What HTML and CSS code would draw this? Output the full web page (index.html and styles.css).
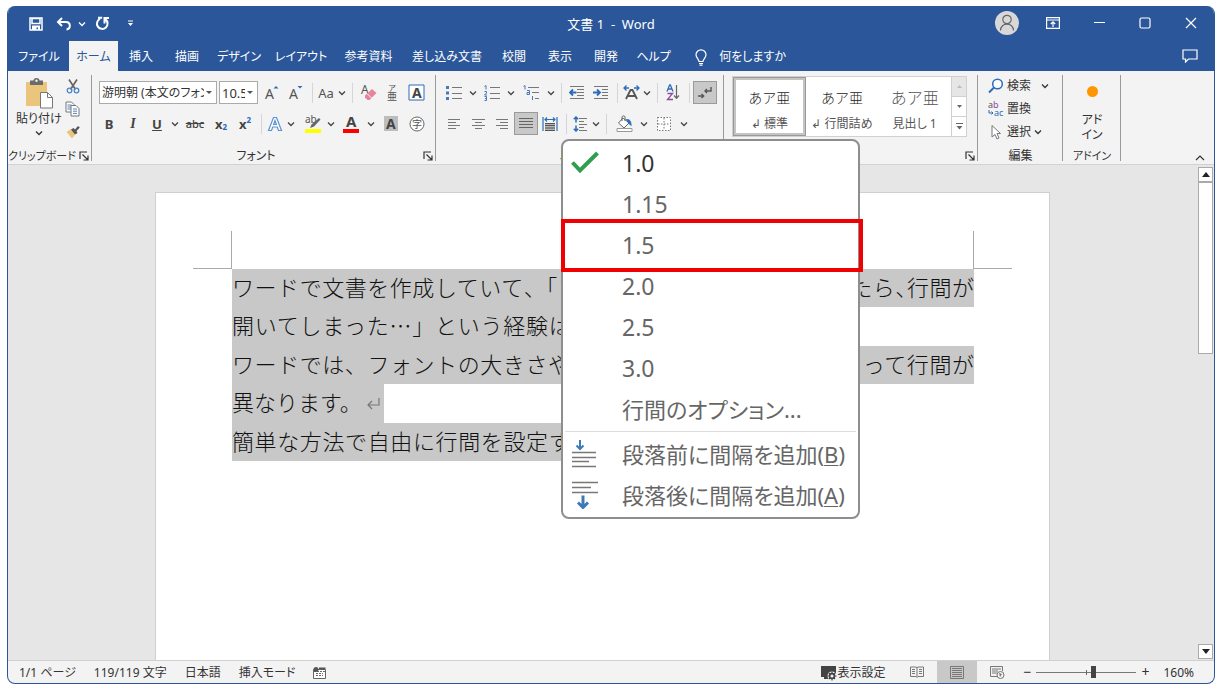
FILE: index.html
```html
<!DOCTYPE html>
<html lang="ja">
<head>
<meta charset="utf-8">
<meta name="viewport" content="width=device-width, initial-scale=1">
<title>文書 1 - Word</title>
<link rel="stylesheet" href="styles.css">
</head>
<body>
<svg class="defs" aria-hidden="true">
  <symbol id="chev" viewBox="0 0 8 8"><path d="M1 2.5l3 3 3-3" fill="none" stroke="currentColor" stroke-width="1.3"/></symbol>
  <symbol id="launch" viewBox="0 0 10 10"><path d="M1 8V1h7M3.500 3.500l5 5M9 4.500v4.500H4.500" fill="none" stroke="#333" stroke-width="1.200"/></symbol>
</svg>
<div class="window">
  <header class="titlebar">
    <div class="quick">
      <button class="tb" aria-label="上書き保存"><svg width="14" height="14" viewBox="0 0 14 14"><path d="M1 1h12v12H1z M3 1.500h8v5H3z" fill="none" stroke="#fff" stroke-width="1.500"/><path d="M3 8.500h8V13H9V10.500H7.500V13H3z" fill="#fff"/></svg></button>
      <button class="tb undo" aria-label="元に戻す"><svg width="16" height="14" viewBox="0 0 16 14"><path d="M6 1L2 5l4 4M2.500 5H10c5 0 5 7 .5 7.500" fill="none" stroke="#fff" stroke-width="2"/></svg></button>
      <button class="chev" aria-label="元に戻すの一覧"><svg width="8" height="8"><use href="#chev"/></svg></button>
      <button class="tb redo" aria-label="繰り返し"><svg width="15" height="15" viewBox="0 0 15 15"><path d="M5 2.800a5.300 5.300 0 1 0 5.500.6M3 1.800h4.200M9.500 7.500V2H14" fill="none" stroke="#fff" stroke-width="2"/></svg></button>
      <button class="tb custom" aria-label="カスタマイズ"><svg width="7" height="7" viewBox="0 0 7 7"><path d="M1 1h5" stroke="#fff"/><path d="M1 3h5L3.500 6z" fill="#fff"/></svg></button>
    </div>
    <h1 class="doc-title">文書 1&nbsp; -&nbsp; Word</h1>
    <div class="controls">
      <button class="avatar" aria-label="アカウント"><svg width="24" height="24" viewBox="0 0 24 24"><circle cx="12" cy="12" r="12" fill="#d8d8d8"/><circle cx="12" cy="8.500" r="4.200" fill="none" stroke="#666" stroke-width="1.200"/><path d="M5.500 19.500c0-8.500 13-8.500 13 0" fill="none" stroke="#666" stroke-width="1.200"/></svg></button>
      <button class="wc" aria-label="リボンの表示オプション"><svg width="14" height="12" viewBox="0 0 14 12"><path d="M.6.6h12.800v10.800H.6zM.6 3h12.800M7 10V5M4.800 7L7 4.800 9.200 7" fill="none" stroke="#fff" stroke-width="1.200"/></svg></button>
      <button class="wc" aria-label="最小化"><svg width="11" height="12" viewBox="0 0 11 12"><path d="M0 5.500h11" stroke="#fff"/></svg></button>
      <button class="wc" aria-label="最大化"><svg width="12" height="12" viewBox="0 0 12 12"><rect x="1" y="1" width="10" height="10" rx="1.500" fill="none" stroke="#fff" stroke-width="1.200"/></svg></button>
      <button class="wc" aria-label="閉じる"><svg width="12" height="12" viewBox="0 0 12 12"><path d="M1 1l10 10M11 1L1 11" stroke="#fff" stroke-width="1.200"/></svg></button>
    </div>
  </header>

  <nav class="tabs">
    <button class="tab t4">ファイル</button>
    <button class="tab t3 active">ホーム</button>
    <button class="tab">挿入</button>
    <button class="tab">描画</button>
    <button class="tab t5">デザイン</button>
    <button class="tab t6">レイアウト</button>
    <button class="tab t7">参考資料</button>
    <button class="tab t8">差し込み文書</button>
    <button class="tab">校閲</button>
    <button class="tab">表示</button>
    <button class="tab">開発</button>
    <button class="tab t3">ヘルプ</button>
    <button class="tab tell"><svg width="12" height="17" viewBox="0 0 12 17"><path d="M4 12.500C4 10 1 9 1 5.800a5 5 0 0 1 10 0C11 9 8 10 8 12.500zM4 14.500h4M4.500 16.200h3" fill="none" stroke="#fff" stroke-width="1.200"/></svg>何をしますか</button>
    <button class="comment" aria-label="コメント"><svg width="16" height="14" viewBox="0 0 16 14"><path d="M1 1h14v9H6.500L3.500 13v-3H1z" fill="none" stroke="#fff" stroke-width="1.200"/></svg></button>
  </nav>

  <section class="ribbon">
    <div class="group clip">
      <div class="clip-body">
        <button class="paste"><svg width="30" height="31" viewBox="0 0 30 31"><path d="M2 4h21v24H2z" fill="#ebc57c"/><path d="M6 2.500h3.500a3 2.500 0 0 1 6 0H19V7H6z" fill="#6b6b6b"/><circle cx="12.500" cy="2.800" r="1.200" fill="#f3f3f3"/><path d="M16.500 14.500h7l5 5v10.500h-12z" fill="#fff" stroke="#777"/><path d="M23.500 14.500v5h5" fill="none" stroke="#777"/></svg><span>貼り付け</span><svg width="8" height="8"><use href="#chev"/></svg></button>
        <div class="clip-side">
          <button aria-label="切り取り"><svg width="14" height="15" viewBox="0 0 14 15"><path d="M3 .5l6.500 10M11 .5l-6.500 10" stroke="#666" stroke-width="1.700"/><circle cx="3.500" cy="11.500" r="2.300" fill="none" stroke="#4a86c5" stroke-width="1.300"/><circle cx="10.500" cy="11.500" r="2.300" fill="none" stroke="#4a86c5" stroke-width="1.300"/></svg></button>
          <button aria-label="コピー"><svg width="15" height="16" viewBox="0 0 15 16"><path d="M1 1h5.500L9 3.500V11H1z" fill="#fff" stroke="#777"/><path d="M2.500 4h4M2.500 6h4M2.500 8h4" stroke="#4a86c5"/><path d="M6 4.500h5l3 3v7.500H6z" fill="#fff" stroke="#777"/><path d="M8 8h4M8 10.200h4M8 12.400h4" stroke="#4a86c5"/></svg></button>
          <button aria-label="書式のコピー"><svg width="14" height="14" viewBox="0 0 14 14"><path d="M.5 7l4.500-3 4.500 5L6 13.500z" fill="#ebc57c"/><path d="M5 4.500L7.500 3l1.500 1.500L12 1l1.800 1.500L10.500 6l1 2L9 9.500z" fill="#555"/></svg></button>
        </div>
      </div>
      <div class="glabel small"><span>クリップボード</span><button class="launch" aria-label="クリップボードの詳細"><svg width="10" height="10"><use href="#launch"/></svg></button></div>
    </div>

    <div class="group font">
      <div class="row r1">
        <button class="combo name"><span>游明朝 (本文のフォント)</span><i></i></button>
        <button class="combo size"><span>10.5</span><i></i></button>
        <button class="b24" aria-label="フォントサイズの拡大"><svg width="16" height="16" viewBox="0 0 16 16"><text x="1" y="14" class="g14">A</text><path d="M9.500 3.500L12 1l2.500 2.500z" fill="#2b6cb8"/></svg></button>
        <button class="b24" aria-label="フォントサイズの縮小"><svg width="16" height="16" viewBox="0 0 16 16"><text x="1" y="14" class="g14">A</text><path d="M9.500 1h5L12 3.500z" fill="#2b6cb8"/></svg></button>
        <s></s>
        <button class="b20 gray">Aa</button><button class="chev" aria-label="文字種の一覧"><svg width="8" height="8"><use href="#chev"/></svg></button>
        <s></s>
        <button class="b24" aria-label="書式のクリア"><svg width="17" height="17" viewBox="0 0 17 17"><text x="1" y="10" class="g12">A</text><path d="M5 11.500L12 5l4.500 4-7 7H7.500L5 13.500z" fill="#e8849a"/><path d="M7 9.500l4.500 4.500" stroke="#f3f3f3"/></svg></button>
        <button class="b24" aria-label="ルビ"><svg width="14" height="18" viewBox="0 0 14 18"><text x="3" y="7" class="g8">ア</text><text x="2" y="16" class="g10">亜</text></svg></button>
        <button class="b24" aria-label="囲み線"><svg width="17" height="17" viewBox="0 0 17 17"><path d="M1 1h15v15H1z" fill="#fff" stroke="#2b6cb8"/><text x="4" y="14" class="g14 bold">A</text></svg></button>
      </div>
      <div class="row r2">
        <button class="b24 strong">B</button>
        <button class="b24 ital">I</button>
        <button class="b24 under">U</button><button class="chev" aria-label="下線の一覧"><svg width="8" height="8"><use href="#chev"/></svg></button>
        <button class="b28 strike">abc</button>
        <button class="b24 xs">x<sub>2</sub></button>
        <button class="b24 xs">x<sup>2</sup></button>
        <s></s>
        <button class="b20" aria-label="文字の効果"><svg width="16" height="16" viewBox="0 0 16 16"><path d="M1.500 14.500L6.500 1.500h3l5 13h-3L10.300 11H5.700l-1.200 3.500zM6.600 8.500h2.800L8 4.500z" fill="#fff" stroke="#5b93cf" stroke-width="1.200"/></svg></button><button class="chev" aria-label="文字の効果の一覧"><svg width="8" height="8"><use href="#chev"/></svg></button>
        <button class="b28 hl" aria-label="蛍光ペン"><svg width="18" height="18" viewBox="0 0 18 18"><path d="M1 14h16v4H1z" fill="#ff0"/><text x="1" y="8" class="g10">ab</text><path d="M15 3l1.500 1.500L10 11.500 6 13l1.500-3.500z" fill="#666"/></svg></button><button class="chev" aria-label="蛍光ペンの色"><svg width="8" height="8"><use href="#chev"/></svg></button>
        <button class="b28" aria-label="フォントの色"><svg width="18" height="18" viewBox="0 0 18 18"><path d="M1 14h16v4H1z" fill="#f00"/><text x="4" y="12" class="g15 bold">A</text></svg></button><button class="chev" aria-label="フォントの色の一覧"><svg width="8" height="8"><use href="#chev"/></svg></button>
        <button class="b28" aria-label="文字の網かけ"><svg width="14" height="15" viewBox="0 0 14 15"><path d="M0 0h14v15H0z" fill="#bdbdbd"/><text x="2" y="13" class="g14 bold">A</text></svg></button>
        <button class="b24" aria-label="囲い文字"><svg width="16" height="16" viewBox="0 0 16 16"><circle cx="8" cy="8" r="7" fill="#fff" stroke="#666"/><text x="3" y="12" class="g10">字</text></svg></button>
      </div>
      <div class="glabel"><span>フォント</span><button class="launch" aria-label="フォントの詳細"><svg width="10" height="10"><use href="#launch"/></svg></button></div>
    </div>

    <div class="group para">
      <div class="row r1">
        <button class="b26" aria-label="箇条書き"><svg width="16" height="14" viewBox="0 0 16 14"><path d="M6 1.500h10M6 7.500h10M6 12.500h10" stroke="#777"/><path d="M0 0h3v3H0zM0 5.500h3v3H0zM0 11h3v3H0z" fill="#4a77b5"/></svg></button><button class="chev" aria-label="箇条書きの一覧"><svg width="8" height="8"><use href="#chev"/></svg></button>
        <button class="b26" aria-label="段落番号"><svg width="16" height="16" viewBox="0 0 16 16"><path d="M6 2.500h10M6 8.500h10M6 13.500h10" stroke="#777"/><path d="M.5 1.500L2 .5v4M.5 6.500h2v1.500l-2 2h2.500M.5 11.500h2v4h-2M1 13.500h1.500" fill="none" stroke="#4a77b5"/></svg></button><button class="chev" aria-label="段落番号の一覧"><svg width="8" height="8"><use href="#chev"/></svg></button>
        <button class="b28" aria-label="アウトライン"><svg width="16" height="16" viewBox="0 0 16 16"><path d="M5 2.500h11M9 7.500h7M12 13.500h4" stroke="#777"/><path d="M.5 1.500L2 .5v4M4 5.500h2.500v4H4v-2h2.500M9.500 11v4" fill="none" stroke="#4a77b5"/></svg></button><button class="chev" aria-label="アウトラインの一覧"><svg width="8" height="8"><use href="#chev"/></svg></button>
        <s></s>
        <button class="b24" aria-label="インデントを減らす"><svg width="16" height="14" viewBox="0 0 16 14"><path d="M1 .5h14M8 3.500h7M8 6.500h7M8 9.500h7M1 12.500h14" stroke="#777"/><path d="M7.500 6.500H1.500M4 3.500l-3 3 3 3" fill="none" stroke="#2b6cb8" stroke-width="1.800"/></svg></button>
        <button class="b24" aria-label="インデントを増やす"><svg width="16" height="14" viewBox="0 0 16 14"><path d="M1 .5h14M9 3.500h6M9 6.500h6M9 9.500h6M1 12.500h14" stroke="#777"/><path d="M0 6.500h6M4 3.500l3 3-3 3" fill="none" stroke="#2b6cb8" stroke-width="1.800"/></svg></button>
        <s></s>
        <button class="b20" aria-label="拡張書式"><svg width="17" height="15" viewBox="0 0 17 15"><path d="M3 14L7.500 5h2L14 14M5 11h7" fill="none" stroke="#555" stroke-width="1.800"/><path d="M1 3h5M3.500.5L1 3l2.500 2.500M16 3h-5M13.500.5L16 3l-2.500 2.500" fill="none" stroke="#2b6cb8" stroke-width="1.300"/></svg></button><button class="chev" aria-label="拡張書式の一覧"><svg width="8" height="8"><use href="#chev"/></svg></button>
        <s></s>
        <button class="b24" aria-label="並べ替え"><svg width="14" height="17" viewBox="0 0 14 17"><path d="M1 7.500L3.700.8h.6L7 7.500M2 5h4" fill="none" stroke="#2b6cb8" stroke-width="1.300"/><path d="M1.500 9.500h5l-5 6h5.500" fill="none" stroke="#8d4ba0" stroke-width="1.300"/><path d="M10.500 1v13M8 11.500l2.500 2.800 2.500-2.800" fill="none" stroke="#666" stroke-width="1.200"/></svg></button>
        <s></s>
        <button class="b24 on" aria-label="編集記号の表示"><svg width="14" height="14" viewBox="0 0 14 14"><path d="M13 1v4H7M9 3L7 5l2 2M0 10h5.500M3.500 8l2.200 2-2.200 2" fill="none" stroke="#555" stroke-width="1.400"/></svg></button>
      </div>
      <div class="row r2">
        <button class="b24" aria-label="左揃え"><svg width="12" height="10" viewBox="0 0 12 10"><path d="M0 .5h12M0 3.500h8M0 6.500h12M0 9.500h8" stroke="#777"/></svg></button>
        <button class="b24" aria-label="中央揃え"><svg width="13" height="10" viewBox="0 0 13 10"><path d="M0 .5h13M3 3.500h7M0 6.500h13M3 9.500h7" stroke="#777"/></svg></button>
        <button class="b24" aria-label="右揃え"><svg width="12" height="10" viewBox="0 0 12 10"><path d="M0 .5h12M4 3.500h8M0 6.500h12M4 9.500h8" stroke="#777"/></svg></button>
        <button class="b24 on" aria-label="両端揃え"><svg width="14" height="12" viewBox="0 0 14 12"><path d="M0 .5h14M0 3.500h14M0 6.500h14M0 9.500h14" stroke="#666"/></svg></button>
        <button class="b24" aria-label="均等割り付け"><svg width="16" height="16" viewBox="0 0 16 16"><path d="M1 1v14M15 1v14M3 3.500h10M5 1.500L3 3.500l2 2M11 1.500l2 2-2 2" fill="none" stroke="#2b6cb8" stroke-width="1.200"/><path d="M3 7h10v8H3z" fill="#b5b5b5"/><path d="M3 7.500h10M3 9.500h10M3 12h10M3 14.500h10" stroke="#555"/></svg></button>
        <s></s>
        <div class="drop">
          <button class="b20" aria-label="行と段落の間隔" aria-expanded="true"><svg width="15" height="16" viewBox="0 0 15 16"><path d="M6 2.500h8M6 5.500h5M6 8.500h8M6 11.500h5M6 14.500h8" stroke="#777"/><path d="M3 1v5.500M.8 3.200L3 1l2.200 2.200M3 9.500V15M.8 12.800L3 15l2.200-2.200" fill="none" stroke="#2b6cb8" stroke-width="1.500"/></svg></button><button class="chev" aria-label="行間の一覧"><svg width="8" height="8"><use href="#chev"/></svg></button>
          <div class="menu" role="menu">
            <button class="item current" role="menuitem"><svg width="30" height="24" viewBox="0 0 30 24"><path d="M2.500 11.500l7.500 8L27.500 2" fill="none" stroke="#2f9e4f" stroke-width="4"/></svg><span>1.0</span></button>
            <button class="item" role="menuitem"><span>1.15</span></button>
            <button class="item marked" role="menuitem"><span>1.5</span></button>
            <button class="item" role="menuitem"><span>2.0</span></button>
            <button class="item" role="menuitem"><span>2.5</span></button>
            <button class="item" role="menuitem"><span>3.0</span></button>
            <button class="item words" role="menuitem"><span>行間のオプション...</span></button>
            <hr>
            <button class="item words" role="menuitem"><svg width="28" height="28" viewBox="0 0 28 28"><path d="M2 12.500h24M2 17.500h24M2 21.500h17M2 26.500h24" stroke="#777" stroke-width="1.500"/><path d="M10 0v8.500M6.500 5.500L10 9l3.500-3.500" fill="none" stroke="#3f7ab8" stroke-width="2"/></svg><span>段落前に間隔を追加(<u>B</u>)</span></button>
            <button class="item words" role="menuitem"><svg width="28" height="28" viewBox="0 0 28 28"><path d="M2 1.500h26M2 6.500h19M2 11.500h26" stroke="#777" stroke-width="1.500"/><path d="M13 14.500v12M8 21.500l5 5 5-5" fill="none" stroke="#3f7ab8" stroke-width="3"/></svg><span>段落後に間隔を追加(<u>A</u>)</span></button>
          </div>
        </div>
        <s></s>
        <button class="b28" aria-label="塗りつぶし"><svg width="17" height="17" viewBox="0 0 17 17"><path d="M7 3l6 5-5 5-5.500-5zM6 6V2c0-1.500 3-1.500 3 0v4" fill="#fff" stroke="#666"/><path d="M10.500 4.500c3 0 4.500 1 4.500 6l-2-2z" fill="#2b6cb8" stroke="#2b6cb8"/><path d="M1 13.500h15v3H1z" fill="#fff" stroke="#999"/></svg></button><button class="chev" aria-label="塗りつぶしの色"><svg width="8" height="8"><use href="#chev"/></svg></button>
        <button class="b28" aria-label="罫線"><svg width="14" height="14" viewBox="0 0 14 14"><path d="M.5.5h13v13H.5zM7 1v12M1 7h12" fill="#fff" stroke="#777" stroke-dasharray="1.500 1.500"/></svg></button><button class="chev" aria-label="罫線の一覧"><svg width="8" height="8"><use href="#chev"/></svg></button>
      </div>
      <div class="glabel"><span>段落</span><button class="launch" aria-label="段落の詳細"><svg width="10" height="10"><use href="#launch"/></svg></button></div>
    </div>

    <div class="group styles">
      <div class="gallery">
        <button class="style sel"><b>あア亜</b><span>↲ 標準</span></button>
        <button class="style"><b>あア亜</b><span>↲ 行間詰め</span></button>
        <button class="style head"><b>あア亜</b><span>見出し 1</span></button>
        <div class="gscroll">
          <button class="off" aria-label="前の行"><svg width="5" height="3" viewBox="0 0 5 3"><path d="M0 3h5L2.500 0z" fill="#bbb"/></svg></button>
          <button aria-label="次の行"><svg width="5" height="3" viewBox="0 0 5 3"><path d="M0 0h5L2.500 3z" fill="#666"/></svg></button>
          <button aria-label="その他"><svg width="7" height="7" viewBox="0 0 7 7"><path d="M0 .5h7" stroke="#666"/><path d="M.5 3h6L3.500 6.500z" fill="#666"/></svg></button>
        </div>
      </div>
      <div class="glabel"><span></span><button class="launch" aria-label="スタイルの詳細"><svg width="10" height="10"><use href="#launch"/></svg></button></div>
    </div>

    <div class="group edit">
      <div class="edit-body">
        <button class="cmd"><svg width="16" height="16" viewBox="0 0 16 16"><circle cx="9.500" cy="6" r="4.800" fill="#fff" stroke="#2b6cb8" stroke-width="1.500"/><path d="M6 9.500L1 14.500" stroke="#2b6cb8" stroke-width="2"/></svg>検索<svg class="far" width="8" height="8"><use href="#chev"/></svg></button>
        <button class="cmd"><svg width="16" height="16" viewBox="0 0 16 16"><text x="0" y="7" class="g9">a<tspan fill="#8d4ba0">b</tspan></text><text x="6" y="15" class="g9 blue">ac</text><path d="M1 9v3h4M3.500 10.500L5 12l-1.500 1.500" fill="none" stroke="#2b6cb8"/></svg>置換</button>
        <button class="cmd"><svg width="16" height="16" viewBox="0 0 16 16"><path d="M4 1.500v11.500l3-2.500 2 4.500 2-1-2-4.500h3.500z" fill="#fff" stroke="#777"/></svg>選択<svg width="8" height="8"><use href="#chev"/></svg></button>
      </div>
      <div class="glabel"><span>編集</span></div>
    </div>

    <div class="group addin">
      <button class="addin-btn"><i></i><span>アド<br>イン</span></button>
      <div class="glabel small"><span>アドイン</span></div>
    </div>
    <button class="collapse" aria-label="リボンを折りたたむ"><svg width="10" height="6" viewBox="0 0 10 6"><path d="M1 5l4-4 4 4" fill="none" stroke="#333" stroke-width="1.200"/></svg></button>
  </section>

  <main class="workspace">
    <div class="canvas">
      <article class="page">
        <div class="corners"><i class="left"></i><i class="right"></i></div>
        <div class="text">
          <p class="full"><mark>ワードで文書を作成していて<span class="half">、</span>「フォントのサイズを大きくしたら<span class="half">、</span>行間が</mark></p>
          <p class="part"><mark>開いてしまった…」という経験はありませんか？</mark></p>
          <p class="full"><mark>ワードでは、フォントの大きさや種類、ページ設定の内容によって行間が</mark></p>
          <p><mark>異なります。<svg width="22" height="16" viewBox="0 0 22 16"><path d="M17 3v7H6M10 6l-4 4 4 4" fill="none" stroke="#777" stroke-width="1.200"/></svg></mark></p>
          <p class="part"><mark>簡単な方法で自由に行間を設定する方法をご紹介</mark></p>
        </div>
      </article>
    </div>
    <div class="vscroll">
      <button aria-label="上へ"><svg width="8" height="5" viewBox="0 0 8 5"><path d="M0 5h8L4 0z" fill="#222"/></svg></button>
      <div class="thumb"></div>
      <button class="down" aria-label="下へ"><svg width="8" height="5" viewBox="0 0 8 5"><path d="M0 0h8L4 5z" fill="#222"/></svg></button>
    </div>
  </main>

  <footer class="status">
    <div class="st-left">
      <span>1/1 ページ</span><span>119/119 文字</span><span>日本語</span><span>挿入モード</span>
      <svg width="13" height="12" viewBox="0 0 13 12"><path d="M.5 2.500h12v9H.5z" fill="#fff" stroke="#666"/><path d="M1 4.500h11M3 6.500h7M3 8.500h7" stroke="#666" stroke-dasharray="2 1"/><circle cx="3" cy="2.500" r="2.500" fill="#555"/><path d="M6 1.500h6.500" stroke="#555" stroke-width="2"/></svg>
    </div>
    <div class="st-right">
      <button class="disp"><svg width="16" height="15" viewBox="0 0 16 15"><path d="M0 0h15v11H0zM3 11h5v2H3z" fill="#444"/><circle cx="11" cy="10" r="4.500" fill="#f3f3f3"/><circle cx="11" cy="10" r="2.500" fill="none" stroke="#444" stroke-width="1.500"/><path d="M11 5.500v9M6.500 10h9M8 7l6 6M14 7l-6 6" stroke="#444" stroke-width="1.200"/><circle cx="11" cy="10" r="1.500" fill="#f3f3f3"/></svg>表示設定</button>
      <button class="view" aria-label="閲覧モード"><svg width="14" height="12" viewBox="0 0 14 12"><path d="M.5 1h5.500l1 .8 1-.8h5.500v9.500H8l-1 1-1-1H.5zM7 2v9M2 3.500h3M2 5.500h3M2 7.500h3M9 3.500h3M9 5.500h3M9 7.500h3" fill="none" stroke="#777"/></svg></button>
      <button class="view cur" aria-label="印刷レイアウト"><svg width="14" height="13" viewBox="0 0 14 13"><path d="M.5.5h13v12H.5zM2 2.500h10M2 4.500h10M2 6.500h10M2 8.500h10M2 10.500h10" fill="none" stroke="#777"/></svg></button>
      <button class="view" aria-label="Webレイアウト"><svg width="15" height="13" viewBox="0 0 15 13"><path d="M7 10.500H.5V.5h12V5M2 3h9M2 5h6M2 7h5" fill="none" stroke="#777"/><circle cx="10.500" cy="9" r="3.500" fill="#f3f3f3" stroke="#777"/><path d="M9 7l3 1-2 3z" fill="#777"/></svg></button>
      <div class="zoom">
        <button aria-label="縮小">−</button>
        <input type="range" min="10" max="300" value="177" aria-label="ズーム">
        <button aria-label="拡大">+</button>
      </div>
      <span class="pct">160%</span>
    </div>
  </footer>
</div>
</body>
</html>
```

FILE: styles.css
```css
* { box-sizing: border-box; }
body {
  margin: 0;
  padding: 6px 8px 7px 7px;
  min-height: 100vh;
  display: flex;
  background: #fff;
  color: #333;
  font: 12px/16px "Noto Sans", "Noto Sans CJK JP", sans-serif;
  font-feature-settings: "palt";
}
button {
  border: 0;
  padding: 0;
  background: none;
  color: inherit;
  font: inherit;
  font-feature-settings: inherit;
  white-space: nowrap;
}
svg { flex: none; }
.defs { position: absolute; width: 0; height: 0; }
.window {
  flex: 1;
  min-width: 0;
  display: flex;
  flex-direction: column;
  border: 1px solid #2b579a;
  border-top: 0;
  border-radius: 8px;
  overflow: hidden;
  background: #f3f3f3;
}

/* Title bar */
.titlebar {
  display: grid;
  grid-template-columns: 1fr auto 1fr;
  align-items: center;
  height: 35px;
  background: #2b579a;
  color: #fff;
}
.quick, .controls { display: flex; align-items: center; }
.quick { padding-left: 16px; }
.controls { justify-content: flex-end; align-self: start; height: 34px; }
.quick button, .controls button { display: flex; align-items: center; justify-content: center; }
.tb { width: 24px; height: 24px; }
.undo { margin-left: 4px; }
.redo { margin-left: 2px; }
.custom { margin-left: 4px; }
.doc-title { margin: 0; font-size: 13px; font-weight: 400; }
.avatar { width: 24px; margin-right: 11px; }
.wc { width: 46px; height: 32px; }

/* Tabs */
.tabs {
  display: flex;
  height: 30px;
  padding-left: 1px;
  background: #2b579a;
  color: #fff;
}
.tab { flex: none; width: 46px; padding-top: 2px; text-align: center; }
.tab.t3 { width: 49px; }
.tab.t4 { width: 60px; }
.tab.t5 { width: 58px; }
.tab.t6 { width: 66px; }
.tab.t7 { width: 69px; }
.tab.t8 { width: 88px; }
.tab.tell { width: 108px; display: flex; align-items: center; justify-content: flex-end; gap: 12px; }
.tab.active { background: #f3f3f3; color: #2b579a; }
.comment { margin-left: auto; padding: 0 16px; display: flex; align-items: center; }

/* Ribbon */
.ribbon {
  position: relative;
  z-index: 2;
  display: flex;
  height: 94px;
  padding-top: 4px;
  border-bottom: 1px solid #d2d2d2;
  background: #f3f3f3;
}
.group {
  flex: none;
  display: flex;
  flex-direction: column;
  position: relative;
}
.group::after {
  content: "";
  position: absolute;
  top: 0;
  right: 0;
  bottom: 3px;
  width: 1px;
  background: #9a9a9a;
}
.glabel {
  margin-top: auto;
  display: flex;
  align-items: center;
  height: 16px;
}
.glabel.small { font-size: 11px; }
.glabel span { flex: 1; text-align: center; white-space: nowrap; }
.launch { width: 16px; display: flex; align-items: center; justify-content: center; }
.row { display: flex; align-items: center; height: 31px; }
.row button { display: flex; align-items: center; justify-content: center; height: 23px; color: #444; }
.row s { width: 8px; height: 20px; background: linear-gradient(#d5d5d5, #d5d5d5) center / 1px 100% no-repeat; }
.b20 { width: 20px; }
.b24 { width: 24px; }
.b26 { width: 26px; }
.b28 { width: 28px; }
.chev { width: 12px; }
.row .on { border: 1px solid #9a9a9a; background: #c8c8c8; }

.clip { width: 84px; }
.clip-body { display: flex; justify-content: space-between; padding: 3px 12px 0 8px; }
.paste { display: flex; flex-direction: column; align-items: center; gap: 2px; }
.clip-side { display: flex; flex-direction: column; gap: 7px; }
.clip-side button { display: flex; height: 16px; width: 15px; justify-content: center; align-items: center; }

.font { width: 344px; padding-top: 2px; }
.font .r1 { padding-left: 7px; }
.font .r2 { padding-left: 5px; }
.row .combo {
  justify-content: space-between;
  margin-right: 2px;
  padding: 0 4px 0 2px;
  border: 1px solid #aaa;
  background: #fff;
  color: #333;
}
.combo span { overflow: hidden; text-align: left; }
.combo i { flex: none; margin-left: 2px; border: 3px solid transparent; border-top-color: #555; border-bottom: 0; }
.combo.name { width: 118px; }
.combo.size { width: 39px; font-size: 13px; }
.row .gray { font-size: 13px; color: #555; }
.row .strong { font-weight: 700; font-size: 13px; }
.row .ital { font: italic 700 14px "Liberation Serif", serif; }
.row .under { font-weight: 700; font-size: 13px; text-decoration: underline; }
.row .strike { font-size: 11px; font-weight: 500; text-decoration: line-through; }
.row .xs { font-weight: 700; font-size: 13px; }
.xs sub, .xs sup { font-size: 8px; color: #2b6cb8; line-height: 8px; }
.xs sub { padding-top: 6px; }
.xs sup { padding-bottom: 8px; }
.row .hl { padding-left: 3px; }
svg text { fill: #555; font-feature-settings: normal; }
svg text.bold { font-weight: 700; fill: #444; }
svg text.blue { fill: #2b6cb8; }
.g8 { font-size: 8px; }
.g9 { font-size: 9px; }
.g10 { font-size: 10px; }
.g12 { font-size: 12px; }
.g14 { font-size: 14px; }
.g15 { font-size: 15px; }

.para { width: 288px; padding-top: 2px; z-index: 1; }
.para .r1 { padding-left: 5px; }
.para .r2 { padding-left: 6px; }

/* Line spacing menu */
.drop { position: relative; z-index: 1; display: flex; align-items: center; height: 31px; }
.menu {
  position: absolute;
  top: 100%;
  left: -9px;
  width: 299px;
  padding: 1px 0 2px;
  border: 2px solid #8e8e8e;
  border-radius: 8px;
  background: #fff;
}
.row .item {
  position: relative;
  display: grid;
  grid-template-columns: 42px 1fr;
  justify-items: start;
  width: 100%;
  height: 41px;
  padding-left: 7px;
  column-gap: 10px;
  color: #666;
  font-size: 23px;
  line-height: 32px;
}
.row .words { font-size: 22px; }
.item svg { grid-column: 1; }
.item span { grid-column: 2; }
.row .item.current { color: #333; }
.marked::after {
  content: "";
  position: absolute;
  inset: -5px -5px -7px -2px;
  border: 4px solid #f00000;
}
.menu hr { margin: 2px 2px 1px; border: 0; border-top: 1px solid #ddd; }
.item u { text-underline-offset: 2px; text-decoration-thickness: 1px; }

.styles { width: 254px; }
.gallery {
  display: flex;
  margin: 1px 11px 0 8px;
  height: 61px;
  border: 1px solid #d0d0d0;
  background: #fff;
}
.style {
  flex: 1;
  display: flex;
  flex-direction: column;
  align-items: center;
  justify-content: space-between;
  padding: 8px 0 1px;
  border: 3px solid transparent;
  color: #555;
}
.style b { font-size: 14px; line-height: 20px; font-weight: 300; color: #222; font-feature-settings: normal; }
.style.head b { font-size: 16px; color: #555; }
.style.sel { border-color: #c4c4c4; outline: 1px solid #999; outline-offset: -1px; }
.gscroll { width: 15px; display: flex; flex-direction: column; border-left: 1px solid #d0d0d0; }
.gscroll button { flex: 1; display: flex; align-items: center; justify-content: center; border-top: 1px solid #d0d0d0; }
.gscroll .off { background: #e6e6e6; border-top: 0; }

.edit { width: 85px; }
.edit-body { display: flex; flex-direction: column; gap: 7px; padding: 3px 0 0 10px; }
.cmd { display: flex; align-items: center; gap: 3px; height: 16px; }
.cmd .far { margin-left: 7px; }
.addin { width: 58px; }
.addin-btn { display: flex; flex-direction: column; align-items: center; padding-top: 11px; }
.addin-btn i { width: 11px; height: 11px; margin-bottom: 15px; border-radius: 50%; background: #ff9500; }
.addin-btn span { line-height: 15px; }
.collapse { margin: auto 9px 3px auto; display: flex; }

/* Document */
.workspace { flex: 1; display: flex; min-height: 0; background: #e6e6e6; }
.canvas { flex: 1; display: flex; padding: 27px 148px 0 147px; }
.page {
  flex: 1;
  border: 1px solid #cfcfcf;
  border-bottom: 0;
  background: #fff;
}
.corners { display: flex; justify-content: space-between; padding: 38px 37px 0; }
.corners i { width: 39px; height: 38px; border-bottom: 1px solid #aaa; }
.corners .left { border-right: 1px solid #aaa; }
.corners .right { border-left: 1px solid #aaa; }
.text { padding: 0 75px 0 76px; color: #111; font: 300 22px/34px "Noto Sans CJK JP", sans-serif; font-feature-settings: normal; text-spacing-trim: space-all; }
.text p { margin: 0; display: flex; height: 38px; }
.text p:nth-child(even) { height: 39px; }
.text mark { background: #c8c8c8; color: inherit; height: 100%; white-space: nowrap; }
.full mark { flex: 1; text-align: justify; text-align-last: justify; white-space: normal; }
.part mark { flex: 0 0 67%; text-align: justify; text-align-last: justify; white-space: normal; }
.half { font-feature-settings: "halt"; }
.vscroll { width: 16px; display: flex; flex-direction: column; padding: 2px 1px 1px 0; }
.vscroll button { display: flex; align-items: center; justify-content: center; height: 15px; border: 1px solid #aaa; background: #fff; }
.thumb { height: 35%; border: 1px solid #aaa; background: #fff; }
.vscroll .down { margin-top: auto; }

/* Status bar */
.status {
  display: flex;
  justify-content: space-between;
  height: 23px;
  border-top: 1px solid #d0d0d0;
  padding: 0 20px 0 11px;
}
.st-left, .st-right, .zoom, .disp, .view { display: flex; align-items: center; }
.st-left { gap: 18px; padding-top: 2px; }
.disp { margin-right: 12px; padding-top: 2px; }
.view { width: 40px; height: 100%; justify-content: center; }
.cur { background: #c8c8c8; }
.zoom { margin: 0 12px 0 4px; }
.zoom button { width: 12px; font-size: 14px; }
.pct { padding-top: 2px; }
.zoom input {
  appearance: none;
  width: 100px;
  height: 12px;
  margin: 0 3px;
  background:
    linear-gradient(#666, #666) center / 1px 5px no-repeat,
    linear-gradient(#777, #777) center / 100% 1px no-repeat;
}
.zoom input::-webkit-slider-thumb { appearance: none; width: 5px; height: 12px; background: #444; }
```
